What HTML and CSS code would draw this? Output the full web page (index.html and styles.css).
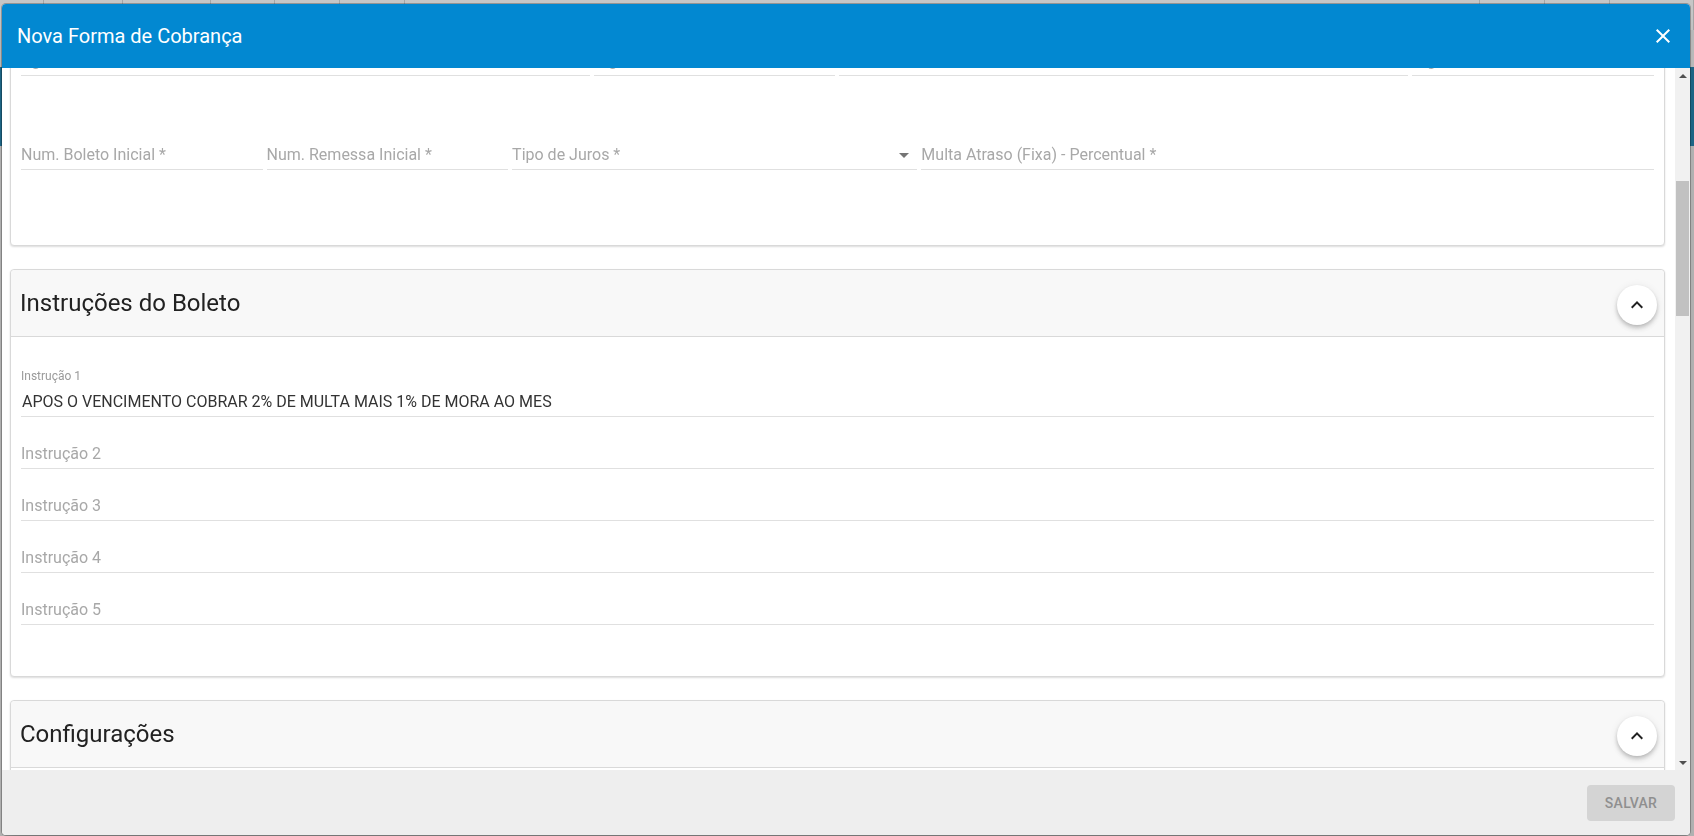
FILE: index.html
```html
<!DOCTYPE html>
<html lang="pt-BR">
<head>
<meta charset="utf-8">
<title>Nova Forma de Cobrança</title>
<link rel="stylesheet" href="styles.css">
</head>
<body>
<div class="backdrop">
  <div class="bd-head">
    <span class="bd-cell c44"></span><span class="bd-cell c79"></span><span class="bd-cell c88"></span><span class="bd-cell c64"></span><span class="bd-cell c65"></span><span class="bd-cell c65"></span><span class="bd-cell cfill"></span><span class="bd-cell c65"></span><span class="bd-cell c65"></span><span class="bd-cell c84"></span>
  </div>
  <div class="bd-gap"></div>
  <div class="bd-band"></div>
</div>

<div class="dialog">
  <header class="dialog-head">
    <h1 class="dialog-title">Nova Forma de Cobrança</h1>
    <button class="close-btn" type="button" aria-label="Fechar">
      <svg viewBox="0 0 24 24" width="24" height="24"><path d="M19 6.41L17.59 5 12 10.59 6.41 5 5 6.41 10.59 12 5 17.59 6.41 19 12 13.41 17.59 19 19 17.59 13.41 12z"/></svg>
    </button>
  </header>

  <div class="dialog-body">
    <div class="scroll-view" id="scrollView">

      <section class="card">
        <div class="card-head">
          <h2 class="card-title">Dados Bancários</h2>
          <button class="fab" type="button"><svg viewBox="0 0 24 24" width="24" height="24"><path d="M12 8l-6 6 1.41 1.41L12 10.83l4.59 4.58L18 14z"/></svg></button>
        </div>
        <div class="card-body rows">
          <div class="row">
            <div class="field w35"><span class="flabel"></span><div class="finput"><span class="ph">Descrição *</span></div></div>
            <div class="field w15"><span class="flabel"></span><div class="finput"><span class="ph">Banco *</span></div></div>
            <div class="field w35"><span class="flabel"></span><div class="finput"><span class="ph">Carteira *</span></div></div>
            <div class="field w15"><span class="flabel"></span><div class="finput"><span class="ph">Convênio *</span></div></div>
          </div>
          <div class="row">
            <div class="field w35"><span class="flabel"></span><div class="finput"><span class="ph">Agência *</span></div></div>
            <div class="field w15"><span class="flabel"></span><div class="finput"><span class="ph">Dígito *</span></div></div>
            <div class="field w35"><span class="flabel"></span><div class="finput"><span class="ph">Conta *</span></div></div>
            <div class="field w15"><span class="flabel"></span><div class="finput"><span class="ph">Dígito *</span></div></div>
          </div>
          <div class="row">
            <div class="field w15"><span class="flabel"></span><div class="finput"><span class="ph">Num. Boleto Inicial *</span></div></div>
            <div class="field w15"><span class="flabel"></span><div class="finput"><span class="ph">Num. Remessa Inicial *</span></div></div>
            <div class="field w25"><span class="flabel"></span><div class="finput select"><span class="ph">Tipo de Juros *</span><span class="arrow"></span></div></div>
            <div class="field w45"><span class="flabel"></span><div class="finput"><span class="ph">Multa Atraso (Fixa) - Percentual *</span></div></div>
          </div>
        </div>
      </section>

      <section class="card" id="cardInstrucoes">
        <div class="card-head">
          <h2 class="card-title">Instruções do Boleto</h2>
          <button class="fab" type="button"><svg viewBox="0 0 24 24" width="24" height="24"><path d="M12 8l-6 6 1.41 1.41L12 10.83l4.59 4.58L18 14z"/></svg></button>
        </div>
        <div class="card-body stack">
          <div class="field"><span class="flabel">Instrução 1</span><div class="finput"><span class="val">APOS O VENCIMENTO COBRAR 2% DE MULTA MAIS 1% DE MORA AO MES</span></div></div>
          <div class="field"><span class="flabel"></span><div class="finput"><span class="ph">Instrução 2</span></div></div>
          <div class="field"><span class="flabel"></span><div class="finput"><span class="ph">Instrução 3</span></div></div>
          <div class="field"><span class="flabel"></span><div class="finput"><span class="ph">Instrução 4</span></div></div>
          <div class="field"><span class="flabel"></span><div class="finput"><span class="ph">Instrução 5</span></div></div>
        </div>
      </section>

      <section class="card">
        <div class="card-head">
          <h2 class="card-title">Configurações</h2>
          <button class="fab" type="button"><svg viewBox="0 0 24 24" width="24" height="24"><path d="M12 8l-6 6 1.41 1.41L12 10.83l4.59 4.58L18 14z"/></svg></button>
        </div>
        <div class="card-body stack">
          <div class="field"><span class="flabel"></span><div class="finput"><span class="ph">Dias para Protesto</span></div></div>
          <div class="field"><span class="flabel"></span><div class="finput"><span class="ph">Dias para Baixa</span></div></div>
          <div class="field"><span class="flabel"></span><div class="finput"><span class="ph">Layout de Remessa</span></div></div>
        </div>
      </section>

    </div>
    <div class="scrollbar" aria-hidden="true">
      <span class="sb-btn"><span class="tri-up"></span></span>
      <span class="sb-track"><span class="sb-thumb"></span></span>
      <span class="sb-btn"><span class="tri-down"></span></span>
    </div>
  </div>

  <footer class="dialog-foot">
    <button class="btn-save" type="button" disabled>SALVAR</button>
  </footer>
</div>
<script src="script.js"></script>
</body>
</html>
```

FILE: styles.css
```css
* { box-sizing: border-box; }

html, body {
  margin: 0;
  height: 100%;
}

body {
  font-family: Roboto, "Liberation Sans", Arial, sans-serif;
  background: #b4b4b4;
  overflow: hidden;
  color: rgba(0, 0, 0, 0.87);
}

/* page behind the modal (dimmed) */
.backdrop {
  display: flex;
  flex-direction: column;
  height: 100%;
}
.bd-head {
  display: flex;
  height: 30px;
  background: #c6c6c6;
}
.bd-cell {
  border-right: 1px solid #a6a6a6;
  flex: 0 0 auto;
}
.c44 { width: 44px; }
.c64 { width: 64px; }
.c65 { width: 65px; }
.c79 { width: 79px; }
.c84 { width: 84px; }
.c88 { width: 88px; }
.cfill { flex: 1 1 auto; }
.bd-gap { height: 37px; background: #bcbcbc; }
.bd-band { height: 79px; background: #1e6788; }

/* dialog */
.dialog {
  position: fixed;
  left: 2px;
  top: 4px;
  width: 1688px;
  height: 831px;
  display: flex;
  flex-direction: column;
  background: #fff;
  border-radius: 4px;
  overflow: hidden;
  box-shadow: 0 0 0 1px rgba(0, 0, 0, 0.25), 0 11px 15px -7px rgba(0, 0, 0, 0.2);
}

.dialog-head {
  flex: 0 0 64px;
  display: flex;
  align-items: center;
  justify-content: space-between;
  padding: 0 15px;
  background: #0288d1;
  color: #fff;
}
.dialog-title {
  margin: 0;
  font-size: 20px;
  font-weight: 400;
  letter-spacing: 0;
}
.close-btn {
  width: 24px;
  height: 24px;
  padding: 0;
  border: 0;
  background: transparent;
  display: flex;
}
.close-btn svg { fill: #fff; }

.dialog-body {
  flex: 1 1 auto;
  min-height: 0;
  display: flex;
}

.scroll-view {
  flex: 1 1 auto;
  overflow: hidden;
  display: flex;
  flex-direction: column;
  gap: 23px;
  padding: 10px 10px 30px 8px;
}

/* fake scrollbar */
.scrollbar {
  flex: 0 0 15px;
  display: flex;
  flex-direction: column;
  background: #f1f1f1;
}
.sb-btn {
  flex: 0 0 15px;
  display: flex;
  align-items: center;
  justify-content: center;
}
.tri-up {
  width: 0; height: 0;
  border-left: 4px solid transparent;
  border-right: 4px solid transparent;
  border-bottom: 4px solid #505050;
}
.tri-down {
  width: 0; height: 0;
  border-left: 4px solid transparent;
  border-right: 4px solid transparent;
  border-top: 4px solid #505050;
}
.sb-track {
  flex: 1 1 auto;
  display: flex;
  flex-direction: column;
}
.sb-thumb {
  margin: 98px 1px 0;
  height: 135px;
  background: #c1c1c1;
}

/* cards */
.card {
  flex: 0 0 auto;
  background: #fff;
  border: 1px solid #d9d9d9;
  border-radius: 4px;
  box-shadow: 0 1px 2px rgba(0, 0, 0, 0.14);
}
.card-head {
  height: 67px;
  display: flex;
  align-items: center;
  justify-content: space-between;
  padding: 0 7px 0 9px;
  background: #f8f8f8;
  border-bottom: 1px solid #d9d9d9;
  border-radius: 4px 4px 0 0;
}
.card-title {
  margin: 0;
  font-size: 24px;
  font-weight: 400;
  color: #222;
}
.fab {
  width: 40px;
  height: 40px;
  margin-top: 4px;
  border: 0;
  border-radius: 50%;
  padding: 0;
  background: #fff;
  display: flex;
  align-items: center;
  justify-content: center;
  box-shadow: 0 2px 4px -1px rgba(0, 0, 0, 0.2), 0 4px 5px 0 rgba(0, 0, 0, 0.1), 0 1px 8px 0 rgba(0, 0, 0, 0.08);
}
.fab svg { fill: #212121; }

.card-body {
  padding: 32px 8px 51px;
}
.card-body.rows {
  display: flex;
  flex-direction: column;
  gap: 46px;
  padding-bottom: 75px;
}
.card-body.stack {
  display: flex;
  flex-direction: column;
  gap: 4px;
}

.row { display: flex; }
.w15 { flex: 0 0 15%; }
.w25 { flex: 0 0 25%; }
.w35 { flex: 0 0 35%; }
.w45 { flex: 0 0 45%; }

.field {
  padding: 0 2px;
  min-width: 0;
}
.flabel {
  display: block;
  height: 14px;
  line-height: 14px;
  margin-bottom: 8px;
  font-size: 12px;
  color: #9a9a9a;
}
.finput {
  height: 26px;
  display: flex;
  align-items: flex-start;
  padding-top: 1px;
  padding-bottom: 4px;
  border-bottom: 1px solid #e0e0e0;
  font-size: 16px;
  line-height: 20px;
}
.ph {
  color: #a8a8a8;
  white-space: nowrap;
}
.val {
  color: #333;
  padding-left: 1px;
  white-space: nowrap;
}
.finput.select .arrow {
  margin: 8px 8px 0 auto;
  width: 0; height: 0;
  border-left: 5px solid transparent;
  border-right: 5px solid transparent;
  border-top: 5px solid #757575;
}

/* footer */
.dialog-foot {
  flex: 0 0 65px;
  display: flex;
  align-items: center;
  justify-content: flex-end;
  padding: 0 15px 0 0;
  background: #eeeeee;
}
.btn-save {
  width: 88px;
  height: 36px;
  border: 0;
  border-radius: 4px;
  background: #d4d4d4;
  color: #8f8f8f;
  font-family: Roboto, "Liberation Sans", Arial, sans-serif;
  font-size: 14px;
  font-weight: 500;
  letter-spacing: 0.3px;
}
```

FILE: script.js
```js
(function () {
  var view = document.getElementById('scrollView');
  var target = document.getElementById('cardInstrucoes');
  var delta = target.getBoundingClientRect().top - 269;
  view.scrollTop = view.scrollTop + delta;
})();
```
